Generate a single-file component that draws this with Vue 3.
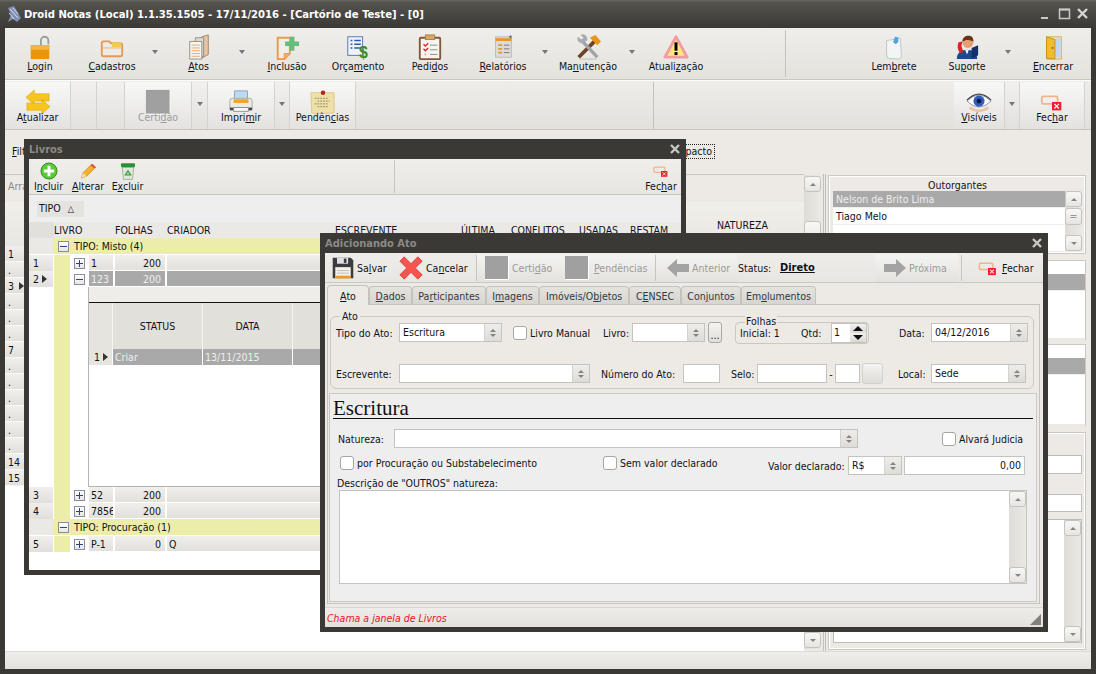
<template>
  <div class="desktop">
    <!-- main window title -->
    <header class="titlebar">
      <svg class="app-logo" width="18" height="18" viewBox="0 0 18 18">
        <path d="M3 3 9 1l7 12-4 4-4-3-5 3 3-7z" fill="#7f8fb5" />
        <path d="M5 4l8 9M8 3l5 6M4 8l5 6" stroke="#d9dde8" stroke-width="1" />
      </svg>
      <span class="app-title">Droid Notas (Local) 1.1.35.1505 - 17/11/2016 - [Cartório de Teste] - [0]</span>
      <span class="win-controls">
        <svg width="50" height="14" viewBox="0 0 50 14">
          <path d="M0 11h7" stroke="#c9c9c5" stroke-width="2" />
          <path d="M18.5 2.5h10v9h-10z" fill="none" stroke="#c9c9c5" stroke-width="1.5" />
          <path d="M18 2.5h11" stroke="#c9c9c5" stroke-width="2" />
          <path d="M37 2l9 9M46 2l-9 9" stroke="#d4d4d0" stroke-width="2.4" />
        </svg>
      </span>
    </header>

    <div class="client">
      <!-- top toolbar -->
      <nav class="main-bar">
        <template v-for="b in mainLeft" :key="b.label || b.id">
          <button v-if="b.icon" class="big-btn" :style="{ width: b.w + 'px' }">
            <svg class="big-icon" viewBox="0 0 28 28" v-html="icons[b.icon]"></svg>
            <Acc :t="b.label" />
          </button>
          <span v-else class="caret-cell" :style="{ width: b.w + 'px' }"><i class="caret"></i></span>
        </template>
        <span class="main-spacer"></span>
        <template v-for="b in mainRight" :key="b.label || b.id">
          <button v-if="b.icon" class="big-btn" :style="{ width: b.w + 'px' }">
            <svg class="big-icon" viewBox="0 0 28 28" v-html="icons[b.icon]"></svg>
            <Acc :t="b.label" />
          </button>
          <span v-else class="caret-cell" :style="{ width: b.w + 'px' }"><i class="caret"></i></span>
        </template>
      </nav>

      <!-- second toolbar -->
      <nav class="sub-bar">
        <template v-for="b in subLeft" :key="b.label || b.id">
          <button v-if="b.icon" class="sub-btn" :class="{ disabled: b.off }" :style="{ width: b.w + 'px' }">
            <svg class="big-icon sub-icon" viewBox="0 0 28 28" v-html="icons[b.icon]"></svg>
            <Acc :t="b.label" />
          </button>
          <span v-else class="sub-caret" :style="{ width: b.w + 'px' }"><i v-if="b.caret" class="caret"></i></span>
        </template>
        <span class="sub-spacer"></span>
        <template v-for="b in subRight" :key="b.label || b.id">
          <button v-if="b.icon" class="sub-btn" :style="{ width: b.w + 'px' }">
            <svg class="big-icon sub-icon" viewBox="0 0 28 28" v-html="icons[b.icon]"></svg>
            <Acc :t="b.label" />
          </button>
          <span v-else class="sub-caret" :style="{ width: b.w + 'px' }"><i class="caret"></i></span>
        </template>
      </nav>

      <div class="filter-bar">
        <span><u>F</u>iltros</span>
        <span class="compact-box">Compacto</span>
      </div>

      <!-- main grid and right side panels -->
      <div class="workspace">
        <section class="main-grid">
          <div class="grid-top"><span class="arr-label">Arrastar</span></div>
          <div class="grid-head"><span class="natureza">NATUREZA</span></div>
          <div v-for="(r, i) in mainRows" :key="i" class="main-row">
            <span>{{ r }}</span><i v-if="i === 2" class="row-arrow"></i>
          </div>
        </section>
        <div class="scroll main-scroll">
          <span class="scroll-btn"><i class="tri-up"></i></span>
          <span class="scroll-thumb"></span>
          <span class="scroll-fill"></span>
          <span class="scroll-btn"><i class="tri-down"></i></span>
        </div>

        <aside class="side">
          <div class="side-group g1">
            <div class="side-title">Outorgantes</div>
            <div class="side-list">
              <div class="list-rows">
                <div class="list-row sel">Nelson de Brito Lima</div>
                <div class="list-row">Tiago Melo</div>
              </div>
              <div class="scroll side-scroll">
                <span class="scroll-btn"><i class="tri-up"></i></span>
                <span class="scroll-thumb grip">=</span>
                <span class="scroll-fill"></span>
                <span class="scroll-btn"><i class="tri-down"></i></span>
              </div>
            </div>
          </div>
          <div class="side-group g2">
            <div class="list-row sel filled">Outorgados</div>
          </div>
          <div class="side-group g3">
            <div class="list-row sel filled">Testemunhas</div>
          </div>
          <div class="side-group g4">
            <div class="plain-input first"></div>
            <div class="plain-input"></div>
            <div class="side-text">
              <div class="scroll side-scroll tall">
                <span class="scroll-btn"><i class="tri-up"></i></span>
                <span class="scroll-fill"></span>
                <span class="scroll-btn"><i class="tri-down"></i></span>
              </div>
            </div>
          </div>
        </aside>
      </div>

      <footer class="statusbar"></footer>
    </div>

    <!-- Livros window -->
    <section class="win livros">
      <div class="win-title">
        <span>Livros</span>
        <svg class="win-x" width="12" height="12" viewBox="0 0 12 12"><path d="M2 2l8 8M10 2l-8 8" stroke="#c8c8c4" stroke-width="2.4" /></svg>
      </div>
      <div class="win-body">
        <div class="liv-bar">
          <button v-for="b in livrosBtns" :key="b.label" class="small-btn" :style="{ width: b.w + 'px' }">
            <svg width="18" height="18" viewBox="0 0 28 28" v-html="icons[b.icon]"></svg>
            <Acc :t="b.label" />
          </button>
          <span class="liv-spacer"></span>
          <button class="small-btn close-btn">
            <svg width="18" height="18" viewBox="0 0 28 28" v-html="icons.fechar"></svg>
            <Acc t="Fec&har" />
          </button>
        </div>
        <div class="group-panel"><span class="group-chip">TIPO <i class="sort-tri">△</i></span></div>
        <div class="liv-head">
          <span class="h-ind"></span>
          <span class="h-livro">LIVRO</span>
          <span class="c-folhas left">FOLHAS</span>
          <span class="c-criador">CRIADOR</span>
          <span class="c-escr">ESCREVENTE</span>
          <span class="c-ult">ÚLTIMA</span>
          <span class="c-conf">CONFLITOS</span>
          <span class="c-usa">USADAS</span>
          <span class="c-res">RESTAM</span>
        </div>
        <div class="liv-group"><span class="ind blank"></span><i class="exp minus group-exp"></i>TIPO: Misto (4)</div>
        <div v-for="r in rowsTop" :key="r.n" class="liv-row" :class="{ selected: r.sel }">
          <span class="ind">{{ r.n }}<i v-if="r.sel" class="row-arrow"></i></span>
          <span class="indent"></span>
          <span class="exp-cell"><i class="exp" :class="r.sel ? 'minus' : 'plus'"></i></span>
          <span class="c-livro">{{ r.livro }}</span>
          <span class="c-folhas">{{ r.folhas }}</span>
          <span class="c-rest">{{ r.criador }}</span>
        </div>
        <div class="detail-wrap">
          <span class="ind-empty"></span>
          <span class="indent"></span>
          <span class="exp-cell empty"></span>
          <div class="detail">
            <div class="detail-top"></div>
            <div class="detail-head">
              <span class="d-ind"></span>
              <span class="d-col">STATUS</span>
              <span class="d-col">DATA</span>
              <span class="d-col grow"></span>
            </div>
            <div class="detail-row">
              <span class="d-ind">1<i class="row-arrow"></i></span>
              <span class="d-cell">Criar</span>
              <span class="d-cell">13/11/2015</span>
              <span class="d-cell grow"></span>
            </div>
          </div>
        </div>
        <div v-for="r in rowsMid" :key="r.n" class="liv-row">
          <span class="ind">{{ r.n }}</span>
          <span class="indent"></span>
          <span class="exp-cell"><i class="exp plus"></i></span>
          <span class="c-livro">{{ r.livro }}</span>
          <span class="c-folhas">{{ r.folhas }}</span>
          <span class="c-rest"></span>
        </div>
        <div class="liv-group"><span class="ind blank"></span><i class="exp minus group-exp"></i>TIPO: Procuração (1)</div>
        <div class="liv-row">
          <span class="ind">5</span>
          <span class="indent"></span>
          <span class="exp-cell"><i class="exp plus"></i></span>
          <span class="c-livro">P-1</span>
          <span class="c-folhas">0</span>
          <span class="c-rest">Q</span>
        </div>
      </div>
    </section>

    <!-- Adicionando Ato window -->
    <section class="win ato">
      <div class="win-title">
        <span>Adicionando Ato</span>
        <svg class="win-x" width="12" height="12" viewBox="0 0 12 12"><path d="M2 2l8 8M10 2l-8 8" stroke="#c8c8c4" stroke-width="2.4" /></svg>
      </div>
      <div class="win-body ato-body">
        <div class="ato-bar">
          <button class="ato-btn b-salvar">
            <svg width="24" height="24" viewBox="0 0 28 28" v-html="icons.salvar"></svg>
            <Acc t="Sa&lvar" />
          </button>
          <button class="ato-btn b-cancelar">
            <svg width="24" height="24" viewBox="0 0 28 28" v-html="icons.cancelar"></svg>
            <Acc t="Ca&ncelar" />
          </button>
          <span class="ato-sep"></span>
          <button class="ato-btn off b-cert">
            <span class="grey-square"></span>
            <Acc t="Certi&dão" />
          </button>
          <button class="ato-btn off b-pend">
            <span class="grey-square"></span>
            <Acc t="&Pendências" />
          </button>
          <span class="ato-sep"></span>
          <button class="ato-btn off b-ant">
            <svg width="24" height="24" viewBox="0 0 24 24"><path d="M1 12 11 3v5h12v8H11v5z" fill="#a3a3a3" /></svg>
            <span>Anterior</span>
          </button>
          <span class="status-label">Status:</span>
          <strong class="status-value">Direto</strong>
          <button class="ato-btn off b-prox">
            <svg width="24" height="24" viewBox="0 0 24 24"><path d="M23 12 13 3v5H1v8h12v5z" fill="#a3a3a3" /></svg>
            <span>Próxima</span>
          </button>
          <span class="ato-sep s-right"></span>
          <button class="ato-btn b-fechar">
            <svg width="22" height="22" viewBox="0 0 28 28" v-html="icons.fechar"></svg>
            <Acc t="&Fechar" />
          </button>
        </div>

        <div class="tabs">
          <span v-for="t in tabs" :key="t.label" class="tab" :class="{ active: t.active }" :style="{ width: t.w + 'px' }">
            <Acc :t="t.label" />
          </span>
        </div>

        <div class="tab-panel">
          <div class="ato-group">
            <span class="legend">Ato</span>
            <div class="form-row">
              <label class="w63">Tipo do Ato:</label>
              <div class="combo w103">
                <span class="combo-val">Escritura</span>
                <span class="combo-btn"><i class="tri-up"></i><i class="tri-down"></i></span>
              </div>
              <span class="check ml11"></span>
              <label class="w73 lbl-check">Livro Manual</label>
              <label class="w29">Livro:</label>
              <div class="combo w73">
                <span class="combo-val"></span>
                <span class="combo-btn"><i class="tri-up"></i><i class="tri-down"></i></span>
              </div>
              <button class="dots-btn">...</button>
              <div class="folhas">
                <span class="folhas-legend">Folhas</span>
                <span class="f-ini">Inicial: 1</span>
                <span class="f-qtd">Qtd:</span>
                <div class="spin">
                  <span class="spin-val">1</span>
                  <span class="spin-btns">
                    <span class="spin-b"><i class="tri-up dark"></i></span>
                    <span class="spin-b"><i class="tri-down dark"></i></span>
                  </span>
                </div>
              </div>
              <label class="w32 ml30">Data:</label>
              <div class="combo w97">
                <span class="combo-val">04/12/2016</span>
                <span class="combo-btn"><i class="tri-up"></i><i class="tri-down"></i></span>
              </div>
            </div>
            <div class="form-row second">
              <label class="w63">Escrevente:</label>
              <div class="combo w191">
                <span class="combo-val"></span>
                <span class="combo-btn"><i class="tri-up"></i><i class="tri-down"></i></span>
              </div>
              <label class="w82 ml11">Número do Ato:</label>
              <div class="field w37"></div>
              <label class="w26 ml11">Selo:</label>
              <div class="field w70"></div>
              <span class="dash">-</span>
              <div class="field w25"></div>
              <span class="selo-btn"></span>
              <label class="w33 ml15">Local:</label>
              <div class="combo w95">
                <span class="combo-val">Sede</span>
                <span class="combo-btn"><i class="tri-up"></i><i class="tri-down"></i></span>
              </div>
            </div>
          </div>

          <div class="escritura">
            <h2 class="escritura-title">Escritura</h2>
            <div class="e-row nat">
              <label class="w56">Natureza:</label>
              <div class="combo w464">
                <span class="combo-val"></span>
                <span class="combo-btn"><i class="tri-up"></i><i class="tri-down"></i></span>
              </div>
              <span class="check ml84"></span>
              <label class="lbl-check">Alvará Judicia</label>
            </div>
            <div class="e-row proc">
              <span class="check up"></span>
              <label class="w246 lbl-check up">por Procuração ou Substabelecimento</label>
              <span class="check up"></span>
              <label class="w148 lbl-check up">Sem valor declarado</label>
              <label class="w80">Valor declarado:</label>
              <div class="combo w54">
                <span class="combo-val">R$</span>
                <span class="combo-btn"><i class="tri-up"></i><i class="tri-down"></i></span>
              </div>
              <div class="field w121 money">0,00</div>
            </div>
            <div class="desc-label">Descrição de "OUTROS" natureza:</div>
            <div class="desc-box">
              <div class="scroll desc-scroll">
                <span class="scroll-btn"><i class="tri-up"></i></span>
                <span class="scroll-fill"></span>
                <span class="scroll-btn"><i class="tri-down"></i></span>
              </div>
            </div>
          </div>
        </div>

        <footer class="ato-status">
          <em>Chama a janela de Livros</em>
          <i class="resize-grip"></i>
        </footer>
      </div>
    </section>
  </div>
</template>

<script setup>
import { h } from "vue";

// "&" marks the accelerator letter, like the Delphi captions
const Acc = (props) => {
  const i = props.t.indexOf("&");
  if (i < 0) return h("span", props.t);
  return h("span", [props.t.slice(0, i), h("u", props.t[i + 1]), props.t.slice(i + 2)]);
};

const icons = {
  login: `<path d="M15 12V7a4 4 0 0 1 8 0v4" fill="none" stroke="#9c9c9a" stroke-width="2"/><rect x="4" y="12" width="20" height="15" fill="#e9950d"/><rect x="4" y="12" width="20" height="5" fill="#f4b63c"/>`,
  cadastros: `<path d="M3 10a2 2 0 0 1 2-2h6l2 2h10a2 2 0 0 1 2 2v10a2 2 0 0 1-2 2H5a2 2 0 0 1-2-2z" fill="#ecebe6" stroke="#e39a58" stroke-width="2"/><rect x="14" y="9" width="10" height="5" fill="#f3c95a"/><path d="M4 15h20" stroke="#e8b07e"/>`,
  atos: `<path d="M17 3l7-2v21l-7 4z" fill="#e8c4a4" stroke="#a08468"/><path d="M10 4h9v20h-9z" fill="#dcdad4" stroke="#8d8d88"/><path d="M4 8h13v19H4z" fill="#f7f5f0" stroke="#8d8d88"/><path d="M6 12h9M6 15h9M6 18h9M6 21h9M6 24h9" stroke="#e8a76e"/>`,
  inclusao: `<path d="M4 4h14l-1 6v11l-6 6H4z" fill="#f0eeea" stroke="#e79a4c" stroke-width="2"/><path d="M11 27v-6h6" fill="#f2b25d" stroke="#e79a4c"/><path d="M15 11h5V6h5v5h5v5h-5v5h-5v-5h-5z" transform="translate(-3 -3)" fill="#62bd7e"/>`,
  orcamento: `<rect x="3" y="3" width="16" height="20" fill="#eef2fa" stroke="#4d73b4"/><path d="M6 7h2M10 7h7M6 11h2M10 11h7M6 15h2M10 15h6" stroke="#2d58a8" stroke-width="1.6"/><text x="15" y="26" font-family="Liberation Sans, sans-serif" font-size="17" font-weight="700" fill="#3f8a1f">$</text>`,
  pedidos: `<rect x="3" y="4" width="22" height="23" rx="1" fill="#f7f5f0" stroke="#84563a" stroke-width="2"/><rect x="9" y="1" width="10" height="5" fill="#d9a760" stroke="#a57f4b"/><path d="M7 11l2 2 3-3M7 16l2 2 3-3" fill="none" stroke="#d8282a" stroke-width="1.5"/><path d="M14 12h8M14 17h8M14 22h8" stroke="#888"/><path d="M8 22h2" stroke="#bbb" stroke-width="2"/>`,
  relatorios: `<rect x="6" y="3" width="17" height="22" fill="#dcdbd6" stroke="#bcbab5"/><path d="M6 6h17" stroke="#e9952a" stroke-width="3"/><path d="M9 12h4M9 16h4M9 20h4" stroke="#e9952a" stroke-width="2"/><path d="M15 12h6M15 16h6M15 20h6" stroke="#77757a"/><path d="M20 3l3-2v4z" fill="#666"/>`,
  manutencao: `<path d="M4 25 21 8" stroke="#6d4328" stroke-width="4"/><path d="M16 4l6-3 6 7-4 4z" fill="#e89617"/><path d="M24 25 8 8" stroke="#9ea3a7" stroke-width="3.5"/><path d="M8 10a5 5 0 0 1-5-7l4 3 2-2-3-3a5 5 0 0 1 7 6z" fill="#a7acb0"/><path d="M5 27h18" stroke="#b8bcbf"/>`,
  atualizacao: `<path d="M14 3 26 25H2z" fill="#ffe87d" stroke="#f19ca3" stroke-width="3" stroke-linejoin="round"/><rect x="12.4" y="9" width="3.2" height="9" fill="#000"/><rect x="12.4" y="19.5" width="3.2" height="3.2" fill="#000"/>`,
  lembrete: `<path d="M6 7l15-2 1 20-3 2-12-1-1-5z" fill="#f3f5f5" stroke="#bcc2c4"/><path d="M13 9l2-6 5 1-2 1 1 3-3 3z" fill="#4ea5dd"/>`,
  suporte: `<path d="M3 27c0-7 5-10 11-10s11 3 11 10z" fill="#1c4a8e"/><path d="M12 17l2 5 2-5z" fill="#fff"/><circle cx="15" cy="9" r="6" fill="#e2a077"/><path d="M9 8c0-5 5-7 8-6s4 3 4 6c-3-1-7-2-9-1z" fill="#6a3417"/><path d="M5 9l4-1-1 5 2 6-3 2c-3-3-4-8-2-12z" fill="#d9242a"/><path d="M19 15l7-3v11l-7 4z" fill="#13306b"/>`,
  encerrar: `<path d="M7 3h16v24H7z" fill="#e8e4c4" stroke="#e3a94a"/><path d="M12 5h10v20H12z" fill="#bfd8f2"/><path d="M7 3l9 3v21l-9-1z" fill="#f0bd2c" stroke="#c68e17"/><circle cx="13.5" cy="15" r="1" fill="#8a5a10"/>`,
  atualizar: `<path d="M10 1v4h16v8H10v4L1 9z" fill="#f7c51c" stroke="#d69e08" stroke-width=".5"/><path d="M18 11v4H2v8h16v4l9-8z" fill="#f7c51c" stroke="#d69e08" stroke-width=".5"/>`,
  certidao: `<rect x="1" y="1" width="26" height="26" fill="#a0a0a0"/><path d="M27 1v26H1" fill="none" stroke="#fff"/>`,
  imprimir: `<path d="M7 2h14v9H7z" fill="#bcd9f4" stroke="#8aa4bc"/><path d="M2 13q0-3 3-3h18q3 0 3 3v8H2z" fill="#ecebe6" stroke="#a8a8a2"/><rect x="6" y="11" width="16" height="4" fill="#f0a526"/><rect x="2" y="20" width="24" height="3" fill="#48484a"/><path d="M6 20h16v4H6z" fill="#fdfdfd" stroke="#888"/>`,
  pendencias: `<path d="M1 4h25v21l-3 1H2z" fill="#eee0a6" stroke="#d9c98b"/><path d="M5 10h14M8 13h13M5 16h15M8 19h12" stroke="#8d8768" stroke-dasharray="2 1"/><circle cx="14" cy="4" r="2.4" fill="#b52222"/>`,
  visiveis: `<path d="M1 13q13-13 26 0-13 13-26 0z" fill="#fff" stroke="#8f8f9a"/><circle cx="14" cy="13" r="6" fill="#2f5dbb"/><circle cx="14" cy="13" r="2.6" fill="#0a1540"/><path d="M1 12Q14-1 27 12" fill="none" stroke="#444" stroke-width="1.4"/><path d="M4 20q10 7 20 0" fill="none" stroke="#e8c3a8" stroke-width="3"/>`,
  fechar: `<rect x="3" y="8" width="17" height="8" rx="1.5" fill="none" stroke="#efb48c" stroke-width="2"/><rect x="14" y="14" width="10" height="9" fill="#ee1c2d"/><path d="M16.5 16l5 5M21.5 16l-5 5" stroke="#fff" stroke-width="1.3"/>`,
  incluir: `<circle cx="14" cy="14" r="12.5" fill="#5cc83a" stroke="#2f8c1a" stroke-width="1.5"/><path d="M14 6v16M6 14h16" stroke="#fff" stroke-width="4.5"/>`,
  alterar: `<path d="M4 25l2-8L20 3l6 5-14 14z" fill="#f5b12d" stroke="#c47a16"/><path d="M18 5l6 5 2-2-5-5z" fill="#e8474a"/><path d="M4 25l2-8 6 5z" fill="#f5dfb0"/>`,
  excluir: `<path d="M5 8h18l-2 19H7z" fill="#dfe8dc" stroke="#7d9b78"/><rect x="3" y="2" width="22" height="6" rx="2" fill="#2e8f35"/><path d="M10 20l4-6 4 6z" fill="none" stroke="#3c9c3a" stroke-width="2"/>`,
  salvar: `<path d="M2 2h21l3 3v21H2z" fill="#3c3c40"/><rect x="7" y="2" width="13" height="7" fill="#dedfe2"/><rect x="15" y="3" width="3" height="5" fill="#3c3c40"/><rect x="5" y="13" width="18" height="13" fill="#f3f1e9"/><path d="M7 17h14M7 20h14" stroke="#b9b6ae"/><rect x="5" y="23" width="18" height="3" fill="#f09a1c"/>`,
  cancelar: `<path d="M6 1 14 9l8-8 5 5-8 8 8 8-5 5-8-8-8 8-5-5 8-8-8-8z" fill="#f4564f" stroke="#d73b37"/>`,
};

const mainLeft = [
  { label: "&Login", icon: "login", w: 70 },
  { label: "&Cadastros", icon: "cadastros", w: 74 },
  { id: "c1", w: 12 },
  { label: "&Atos", icon: "atos", w: 75 },
  { id: "c2", w: 12 },
  { label: "&Inclusão", icon: "inclusao", w: 78 },
  { label: "Orça&mento", icon: "orcamento", w: 64 },
  { label: "Pedi&dos", icon: "pedidos", w: 80 },
  { label: "&Relatórios", icon: "relatorios", w: 66 },
  { id: "c3", w: 18 },
  { label: "Ma&nutenção", icon: "manutencao", w: 68 },
  { id: "c4", w: 20 },
  { label: "Atuali&zação", icon: "atualizacao", w: 68 },
];
const mainRight = [
  { label: "Lem&brete", icon: "lembrete", w: 78 },
  { label: "Su&porte", icon: "suporte", w: 68 },
  { id: "c5", w: 14 },
  { label: "&Encerrar", icon: "encerrar", w: 76 },
];
const subLeft = [
  { label: "A&tualizar", icon: "atualizar", w: 66 },
  { id: "s1", w: 26 },
  { id: "s2", w: 28 },
  { label: "Certi&dão", icon: "certidao", w: 67, off: true },
  { id: "s3", w: 16, caret: true },
  { label: "Impri&mir", icon: "imprimir", w: 67 },
  { id: "s4", w: 15, caret: true },
  { label: "Pendên&cias", icon: "pendencias", w: 66 },
];
const subRight = [
  { label: "&Visíveis", icon: "visiveis", w: 51 },
  { id: "s5", w: 15 },
  { label: "Fec&har", icon: "fechar", w: 65 },
];
const livrosBtns = [
  { label: "I&ncluir", icon: "incluir", w: 39 },
  { label: "&Alterar", icon: "alterar", w: 40 },
  { label: "E&xcluir", icon: "excluir", w: 39 },
];

const tabs = [
  { label: "&Ato", w: 42, active: true },
  { label: "&Dados", w: 43 },
  { label: "Pa&rticipantes", w: 74 },
  { label: "I&magens", w: 53 },
  { label: "Imóveis/O&bjetos", w: 90 },
  { label: "C&ENSEC", w: 52 },
  { label: "Con&juntos", w: 60 },
  { label: "Em&olumentos", w: 75 },
];

const mainRows = ["1", ".", "3", ".", ".", ".", "7", ".", ".", ".", ".", ".", ".", "14", "15"];
const rowsTop = [
  { n: 1, livro: "1", folhas: 200, criador: "" },
  { n: 2, livro: "123", folhas: 200, criador: "", sel: true },
];
const rowsMid = [
  { n: 3, livro: "52", folhas: 200 },
  { n: 4, livro: "7856", folhas: 200 },
];
</script>

<style>
body {
  margin: 0;
  background: #3a3935;
}
</style>

<style scoped>
.desktop {
  position: relative;
  width: 1096px;
  height: 674px;
  overflow: hidden;
  display: flex;
  flex-direction: column;
  background: #3a3935;
  font-family: "DejaVu Sans Condensed", "DejaVu Sans", sans-serif;
  font-stretch: condensed;
  font-size: 10.5px;
  color: #10121c;
}
button {
  font: inherit;
  color: inherit;
  border: 0;
  background: none;
  padding: 0;
}
u {
  text-underline-offset: 1px;
}

/* title bar */
.titlebar {
  height: 28px;
  flex: none;
  display: flex;
  align-items: center;
  padding: 0 5px;
  background: linear-gradient(#6b6b66 0, #55544f 2px, #4c4b46 10px, #3a3935 28px);
}
.app-logo {
  margin-right: 1px;
}
.app-title {
  color: #fff;
  font-weight: 700;
  font-size: 11.2px;
}
.win-controls {
  margin-left: auto;
  display: flex;
}

.client {
  flex: 1;
  margin: 0 5px 5px;
  min-height: 0;
  display: flex;
  flex-direction: column;
  background: #edeae5;
}

/* toolbars */
.main-bar {
  height: 52px;
  flex: none;
  display: flex;
  background: linear-gradient(#f0eeea, #e4e2dd);
  border-bottom: 1px solid #c9c8c3;
  box-sizing: border-box;
}
.big-btn {
  display: flex;
  flex-direction: column;
  align-items: center;
  padding-top: 6px;
  box-sizing: border-box;
  white-space: nowrap;
}
.big-icon {
  width: 26px;
  height: 26px;
  flex: none;
  margin-bottom: 0;
}
.caret-cell {
  padding-top: 22px;
  display: flex;
  justify-content: center;
  box-sizing: border-box;
}
.caret {
  display: block;
  width: 0;
  height: 0;
  border-left: 3.5px solid transparent;
  border-right: 3.5px solid transparent;
  border-top: 4px solid #76767a;
}
.main-spacer {
  flex: 1;
  margin: 2px 0 2px 75px;
  border-left: 1px solid #c2c1bc;
}
.sub-bar {
  height: 50px;
  flex: none;
  display: flex;
  box-sizing: border-box;
  padding: 1px 6px 0 0;
  background: linear-gradient(#efedea, #e3e1dc);
  border-top: 1px solid #fbfbfa;
  border-bottom: 1px solid #c6c5c0;
}
.sub-btn {
  display: flex;
  flex-direction: column;
  align-items: center;
  padding-top: 7px;
  box-sizing: border-box;
  background: linear-gradient(#f8f8f7, #e3e2df);
  border-right: 1px solid #d3d2cd;
  white-space: nowrap;
}
.sub-btn.disabled {
  color: #9c9c9c;
}
.sub-icon {
  margin-bottom: -4px;
}
.sub-caret {
  padding-top: 20px;
  display: flex;
  justify-content: center;
  box-sizing: border-box;
  background: linear-gradient(#f1f0ee, #e2e1de);
  border-right: 1px solid #d3d2cd;
}
.sub-spacer {
  flex: 1;
  margin: 0 300px 0 0;
  border-right: 1px solid #c2c1bc;
}
.filter-bar {
  height: 44px;
  flex: none;
  display: flex;
  align-items: flex-start;
  padding: 15px 376px 0 7px;
  box-sizing: border-box;
}
.compact-box {
  margin-left: auto;
  border: 1px dotted #222;
  padding: 0 2px;
  line-height: 13px;
  margin-top: -1px;
}

/* main grid under the windows */
.workspace {
  flex: 1;
  min-height: 0;
  display: flex;
}
.main-grid {
  width: 799px;
  background: #fff;
  border-top: 1px solid #c6c5c0;
  box-sizing: border-box;
}
.grid-top {
  height: 27px;
  background: #edeae5;
  color: #8b8b8b;
  padding: 5px 3px 0;
  box-sizing: border-box;
}
.grid-head {
  height: 44px;
  background: linear-gradient(#f1efe9, #e9e7e2);
  display: flex;
  align-items: flex-end;
  padding: 0 0 15px 712px;
  box-sizing: border-box;
}
.main-row {
  height: 16px;
  width: 19px;
  padding-left: 3px;
  box-sizing: border-box;
  display: flex;
  align-items: center;
  gap: 5px;
  background: linear-gradient(#f0efec, #e2e0db);
  border-bottom: 1px solid #f7f6f3;
}
.row-arrow {
  display: inline-block;
  width: 0;
  height: 0;
  border-top: 4px solid transparent;
  border-bottom: 4px solid transparent;
  border-left: 5px solid #333;
  flex: none;
}
.scroll {
  display: flex;
  flex-direction: column;
  background: linear-gradient(90deg, #dddcd7, #ebe9e4);
}
.main-scroll {
  width: 17px;
  padding: 1px 0;
  box-sizing: border-box;
  margin-right: 2px;
  margin-top: 1px;
  margin-bottom: 2px;
}
.scroll-btn,
.scroll-thumb {
  height: 16px;
  flex: none;
  box-sizing: border-box;
  border: 1px solid #c4c3be;
  border-radius: 3px;
  background: linear-gradient(#f7f7f6, #e6e5e1);
  display: flex;
  align-items: center;
  justify-content: center;
}
.scroll-thumb {
  margin-top: 29px;
  height: 30px;
}
.scroll-fill {
  flex: 1;
}
.tri-up,
.tri-down {
  display: block;
  width: 0;
  height: 0;
  border-left: 3px solid transparent;
  border-right: 3px solid transparent;
}
.tri-up {
  border-bottom: 3px solid #85847f;
}
.tri-down {
  border-top: 3px solid #85847f;
}
.tri-up.dark {
  border-left-width: 5px;
  border-right-width: 5px;
  border-bottom: 5px solid #111;
}
.tri-down.dark {
  border-left-width: 5px;
  border-right-width: 5px;
  border-top: 5px solid #111;
}

/* right side */
.side {
  flex: 1;
  margin-right: 5px;
  display: flex;
  flex-direction: column;
  padding-left: 2px;
  border-left: 3px double #c0bfba;
}
.side-group {
  border: 1px solid #c9c8c3;
  box-shadow: inset 0 0 0 1px #fff;
  padding: 0 3px 0 4px;
  box-sizing: border-box;
}
.g1 {
  height: 79px;
  margin-top: 1px;
}
.side-title {
  text-align: center;
  height: 15px;
  line-height: 19px;
}
.side-list {
  display: flex;
  height: 60px;
  background: #fff;
}
.list-rows {
  flex: 1;
}
.list-row {
  height: 16px;
  line-height: 16px;
  padding-left: 3px;
  border-bottom: 1px solid #f0efec;
}
.list-row.sel {
  background: #a9a9a9;
  color: #eee;
}
.side-scroll {
  width: 17px;
}
.side-scroll .scroll-thumb {
  margin-top: 1px;
  height: 17px;
  color: #999;
}
.grip {
  line-height: 1;
}
.g2,
.g3 {
  background: #fff;
  padding-top: 13px;
  border-bottom: 4px solid #edeae5;
}
.g2 {
  margin-top: 6px;
  height: 82px;
}
.g3 {
  margin-top: 2px;
  height: 84px;
}
.filled {
  width: 100%;
  height: 16px;
}
.g4 {
  flex: 1;
  margin-top: 4px;
  margin-bottom: 1px;
  padding-top: 22px;
  display: flex;
  flex-direction: column;
  min-height: 0;
}
.plain-input {
  height: 19px;
  background: #fff;
  border: 1px solid #bdbcb7;
  box-sizing: border-box;
  margin-bottom: 20px;
}
.plain-input + .plain-input {
  margin-bottom: 7px;
  height: 18px;
}
.side-text {
  flex: 1;
  background: #fff;
  border: 1px solid #bdbcb7;
  display: flex;
  justify-content: flex-end;
  margin-bottom: 6px;
}
.tall {
  height: 100%;
}
.statusbar {
  height: 18px;
  flex: none;
  border-top: 1px solid #dcdbd6;
  box-sizing: border-box;
  background: linear-gradient(#f0eeea, #e3e1dc);
}

/* floating windows */
.win {
  position: absolute;
  background: #3a3935;
  display: flex;
  flex-direction: column;
  box-sizing: border-box;
  padding: 0 5px 5px;
}
.win-title {
  height: 20px;
  flex: none;
  display: flex;
  align-items: center;
  justify-content: space-between;
  color: #8a8a86;
  font-weight: 700;
  font-size: 11px;
}
.win-body {
  flex: 1;
  min-height: 0;
  background: #fff;
  overflow: hidden;
}
.livros {
  left: 24px;
  top: 139px;
  width: 662px;
  height: 436px;
}

/* Livros */
.liv-bar {
  height: 36px;
  display: flex;
  background: linear-gradient(#f0eeea, #e8e6e1);
  border-bottom: 1px solid #c6c5c0;
  box-sizing: border-box;
}
.small-btn {
  display: flex;
  flex-direction: column;
  align-items: center;
  padding-top: 3px;
  box-sizing: border-box;
  white-space: nowrap;
}
.small-btn svg {
  flex: none;
}
.liv-spacer {
  flex: 1;
  margin: 1px 0 1px 247px;
  border-left: 1px solid #c6c5c0;
}
.close-btn {
  width: 34px;
  margin-right: 3px;
}
.group-panel {
  height: 27px;
  background: #eeeeee;
  padding: 6px 0 0 8px;
  box-sizing: border-box;
}
.group-chip {
  display: inline-block;
  width: 47px;
  height: 16px;
  line-height: 15px;
  background: #e4e3df;
  padding-left: 2px;
  box-sizing: border-box;
}
.sort-tri {
  font-style: normal;
  margin-left: 4px;
  font-size: 9px;
}
.liv-head {
  height: 16px;
  display: flex;
  align-items: center;
  background: #ebe9e5;
  white-space: nowrap;
}
.h-ind {
  width: 25px;
  flex: none;
  align-self: stretch;
  background: #e2e0db;
}
.h-livro {
  width: 61px;
  flex: none;
  padding-left: 0;
}
.c-livro {
  width: 24px;
  flex: none;
  padding-left: 2px;
  overflow: hidden;
  box-sizing: border-box;
}
.c-folhas {
  width: 50px;
  flex: none;
  text-align: right;
  padding-right: 4px;
  box-sizing: border-box;
  margin-left: 2px;
}
.c-folhas.left {
  text-align: left;
  margin-left: 0;
  width: 52px;
}
.c-criador {
  width: 168px;
  flex: none;
}
.c-escr {
  width: 126px;
  flex: none;
}
.c-ult {
  width: 50px;
  flex: none;
}
.c-conf {
  width: 68px;
  flex: none;
}
.c-usa {
  width: 51px;
  flex: none;
}
.c-res {
  flex: none;
}
.liv-group {
  height: 16px;
  display: flex;
  align-items: center;
  background: #ecedaa;
  border-bottom: 1px solid #fff;
}
.ind {
  width: 24px;
  flex: none;
  align-self: stretch;
  display: flex;
  align-items: center;
  gap: 3px;
  padding-left: 4px;
  box-sizing: border-box;
  background: linear-gradient(#f0efec, #e1dfda);
}
.ind.blank {
  background: #ebe9e5;
}
.group-exp {
  margin: 0 5px 0 5px;
}
.liv-row {
  height: 16px;
  display: flex;
  align-items: stretch;
  background: #fff;
}
.liv-row > span {
  line-height: 16px;
}
.indent {
  width: 17px;
  flex: none;
  background: #ecedaa;
  border-left: 1px solid #fff;
  box-sizing: border-box;
}
.exp-cell {
  width: 19px;
  flex: none;
  display: flex;
  align-items: center;
  justify-content: center;
  background: #fff;
}
.exp {
  display: block;
  position: relative;
  width: 9px;
  height: 9px;
  flex: none;
  border: 1px solid #8b8e99;
  background: linear-gradient(#fff, #e6e6e6);
}
.exp::before {
  content: "";
  position: absolute;
  left: 1px;
  right: 1px;
  top: 4px;
  height: 1px;
  background: #29468c;
}
.exp.plus::after {
  content: "";
  position: absolute;
  top: 1px;
  bottom: 1px;
  left: 4px;
  width: 1px;
  background: #29468c;
}
.liv-row .c-livro,
.liv-row .c-folhas,
.liv-row .c-rest {
  background: linear-gradient(#f0efec, #e2e0db);
  border-bottom: 1px solid #fff;
  box-sizing: border-box;
}
.c-rest {
  flex: 1;
  margin-left: 2px;
  padding-left: 2px;
}
.liv-row.selected .c-livro,
.liv-row.selected .c-folhas,
.liv-row.selected .c-rest {
  background: #a9a9a9;
  color: #eee;
}
.detail-wrap {
  height: 200px;
  display: flex;
}
.ind-empty {
  width: 24px;
  flex: none;
}
.exp-cell.empty {
  width: 18px;
}
.detail {
  flex: 1;
  border-left: 1px solid #b4b4b4;
  border-bottom: 1px solid #b4b4b4;
  margin-bottom: 0;
  display: flex;
  flex-direction: column;
}
.detail-top {
  height: 15px;
  background: #efede9;
  border-bottom: 1px solid #111;
}
.detail-head {
  height: 46px;
  display: flex;
  background: #f5f4f1;
}
.d-ind {
  width: 23px;
  flex: none;
  display: flex;
  align-items: center;
  gap: 3px;
  padding-left: 5px;
  box-sizing: border-box;
  background: #e6e4df;
}
.d-col {
  width: 89px;
  flex: none;
  display: flex;
  align-items: center;
  justify-content: center;
  background: #e2e0db;
  margin-left: 1px;
}
.grow {
  flex: 1;
}
.detail-row {
  height: 16px;
  display: flex;
}
.d-cell {
  width: 89px;
  flex: none;
  background: #a9a9a9;
  color: #eee;
  margin-left: 1px;
  padding-left: 2px;
  box-sizing: border-box;
  line-height: 16px;
}
.d-cell.grow {
  flex: 1;
}

/* Adicionando Ato */
.ato {
  left: 320px;
  top: 233px;
  width: 728px;
  height: 399px;
}
.ato-body {
  background: #edeae5;
  display: flex;
  flex-direction: column;
}
.ato-bar {
  height: 30px;
  flex: none;
  display: flex;
  align-items: center;
  box-sizing: border-box;
  border-bottom: 1px solid #c9c8c3;
  background: linear-gradient(#efedea, #e8e6e1);
  white-space: nowrap;
}
.ato-btn {
  height: 28px;
  display: flex;
  align-items: center;
  box-sizing: border-box;
  flex: none;
}
.ato-btn.off {
  color: #9a9a9a;
  background: linear-gradient(#f4f4f2, #e4e2de);
}
.b-salvar {
  width: 63px;
  gap: 2px;
  padding-left: 6px;
}
.b-cancelar {
  width: 88px;
  gap: 3px;
  padding-left: 11px;
}
.ato-sep {
  width: 1px;
  height: 26px;
  background: #c6c5c0;
  flex: none;
}
.grey-square {
  width: 24px;
  height: 24px;
  background: #a0a0a0;
  border-right: 1px solid #fff;
  border-bottom: 1px solid #fff;
  box-sizing: border-box;
  flex: none;
}
.b-cert {
  width: 79px;
  gap: 3px;
  padding-left: 8px;
}
.b-pend {
  width: 99px;
  gap: 5px;
  padding-left: 9px;
}
.b-ant {
  width: 81px;
  padding-left: 10px;
  gap: 2px;
}
.status-label {
  margin-left: 1px;
  width: 42px;
  flex: none;
}
.status-value {
  width: 95px;
  flex: none;
  font-size: 11px;
}
.status-value {
  text-decoration: underline;
}
.b-prox {
  width: 83px;
  padding-left: 8px;
  gap: 2px;
}
.s-right {
  margin-left: 3px;
}
.b-fechar {
  gap: 3px;
  padding-left: 15px;
}

/* tabs */
.tabs {
  height: 20px;
  flex: none;
  margin-top: 1px;
  padding-left: 2px;
  display: flex;
  align-items: flex-end;
  position: relative;
  z-index: 1;
}
.tab {
  height: 18px;
  display: flex;
  align-items: center;
  justify-content: center;
  box-sizing: border-box;
  flex: none;
  color: #333845;
  white-space: nowrap;
  background: linear-gradient(#e5e3de, #d7d5d0);
  border: 1px solid #c3c2bd;
  border-bottom: 0;
  border-radius: 4px 4px 0 0;
}
.tab.active {
  height: 20px;
  color: #10121c;
  background: #edeae5;
  margin-bottom: -1px;
}
.tab-panel {
  flex: 1;
  margin: 0 3px 3px 2px;
  min-height: 0;
  border: 1px solid #c3c2bd;
  box-sizing: border-box;
  padding: 11px 1px 1px 1px;
  display: flex;
  flex-direction: column;
}
.ato-group {
  position: relative;
  margin: 0 4px 0 1px;
  height: 73px;
  flex: none;
  border: 1px solid #c9c8c3;
  border-radius: 6px;
  padding: 6px 0 0 5px;
  box-sizing: border-box;
}
.legend {
  position: absolute;
  left: 9px;
  top: -8px;
  padding: 0 2px;
  background: #edeae5;
  line-height: 14px;
}
.form-row {
  height: 19px;
  display: flex;
  align-items: center;
  white-space: nowrap;
}
.form-row.second {
  margin-top: 22px;
}
label {
  flex: none;
}
.combo {
  height: 19px;
  flex: none;
  display: flex;
  box-sizing: border-box;
  background: #fff;
  border: 1px solid #c4c3be;
}
.combo-val {
  flex: 1;
  padding-left: 3px;
  line-height: 16px;
  overflow: hidden;
}
.combo-btn {
  width: 16px;
  flex: none;
  display: flex;
  flex-direction: column;
  align-items: center;
  justify-content: center;
  gap: 2px;
  background: linear-gradient(#eeedea, #dedcd8);
  border-left: 1px solid #d3d2cd;
}
.field {
  height: 19px;
  flex: none;
  background: #fff;
  border: 1px solid #c4c3be;
  box-sizing: border-box;
}
.money {
  text-align: right;
  padding-right: 3px;
  line-height: 17px;
  margin-left: 2px;
}
.check {
  width: 14px;
  height: 14px;
  flex: none;
  box-sizing: border-box;
  background: #fff;
  border: 1px solid #a7a6a1;
  border-radius: 3px;
}
.lbl-check {
  margin-left: 3px;
}
.up {
  margin-bottom: 5px;
}
.dots-btn {
  width: 14px;
  height: 21px;
  flex: none;
  margin-left: 3px;
  margin-right: 13px;
  box-sizing: border-box;
  border: 1px solid #a9a8a3;
  border-radius: 3px;
  background: linear-gradient(#f5f4f2, #e0dfdb);
  padding-top: 5px;
  line-height: 1;
}
.folhas {
  position: relative;
  width: 134px;
  height: 22px;
  flex: none;
  box-sizing: border-box;
  border: 1px solid #c9c8c3;
  border-radius: 4px;
  display: flex;
  align-items: center;
  padding-left: 4px;
}
.folhas-legend {
  position: absolute;
  left: 9px;
  top: -7px;
  background: #edeae5;
  padding: 0 1px;
  line-height: 11px;
}
.f-ini {
  width: 61px;
  flex: none;
}
.f-qtd {
  width: 30px;
  flex: none;
}
.spin {
  width: 36px;
  height: 20px;
  box-sizing: border-box;
  background: #fff;
  border: 1px solid #c4c3be;
  display: flex;
  flex: none;
}
.spin-val {
  flex: 1;
  padding-left: 2px;
  line-height: 17px;
}
.spin-btns {
  width: 16px;
  flex: none;
  display: flex;
  flex-direction: column;
  background: #edeae5;
}
.spin-b {
  flex: 1;
  display: flex;
  align-items: center;
  justify-content: center;
  background: linear-gradient(#f2f1ef, #d9d8d4);
  border-radius: 3px;
}
.dash {
  width: 8px;
  flex: none;
  text-align: center;
}
.selo-btn {
  width: 21px;
  height: 21px;
  flex: none;
  margin-left: 2px;
  box-sizing: border-box;
  border: 1px solid #d3d2cd;
  border-radius: 3px;
  background: linear-gradient(#f5f4f2, #dcdbd7);
}
.w25 { width: 25px; }
.w26 { width: 26px; }
.w29 { width: 29px; }
.w32 { width: 32px; }
.w33 { width: 33px; }
.w37 { width: 37px; }
.w54 { width: 54px; }
.w56 { width: 56px; }
.w63 { width: 63px; }
.w70 { width: 70px; }
.w73 { width: 73px; }
.w80 { width: 80px; }
.w82 { width: 82px; }
.w95 { width: 95px; }
.w97 { width: 97px; }
.w103 { width: 103px; }
.w121 { width: 121px; }
.w148 { width: 148px; }
.w191 { width: 191px; }
.w246 { width: 246px; }
.w464 { width: 464px; }
.ml11 { margin-left: 11px; }
.ml15 { margin-left: 15px; }
.ml30 { margin-left: 30px; }
.ml84 { margin-left: 84px; }

/* Escritura panel */
.escritura {
  flex: 1;
  margin: 4px 1px 0 0;
  min-height: 0;
  border: 1px solid #c9c8c3;
  box-sizing: border-box;
  background: #eeeeee;
  padding: 2px 3px 0;
  white-space: nowrap;
}
.escritura-title {
  margin: 0;
  height: 23px;
  font-family: "Liberation Serif", serif;
  font-stretch: normal;
  font-weight: 400;
  font-size: 21px;
  line-height: 25px;
  color: #111;
  border-bottom: 1px solid #111;
  box-sizing: border-box;
}
.e-row {
  display: flex;
  align-items: center;
  padding-left: 5px;
  height: 19px;
}
.nat {
  margin-top: 10px;
}
.proc {
  margin-top: 8px;
  padding-left: 7px;
}
.desc-label {
  margin: 1px 0 0 4px;
  line-height: 14px;
}
.desc-box {
  margin: 0 0 0 6px;
  width: 688px;
  height: 94px;
  background: #fff;
  border: 1px solid #c4c3be;
  box-sizing: border-box;
  display: flex;
  justify-content: flex-end;
}
.desc-scroll {
  width: 17px;
}
.ato-status {
  height: 20px;
  flex: none;
  display: flex;
  align-items: center;
  justify-content: space-between;
  padding-left: 2px;
  background: linear-gradient(#efedea, #e3e1dc);
  color: #e8131e;
  border-top: 1px solid #d8d7d2;
  box-sizing: border-box;
}
.resize-grip {
  width: 0;
  height: 0;
  margin: 4px 2px 0 0;
  border-left: 11px solid transparent;
  border-bottom: 11px solid #808080;
}
</style>
